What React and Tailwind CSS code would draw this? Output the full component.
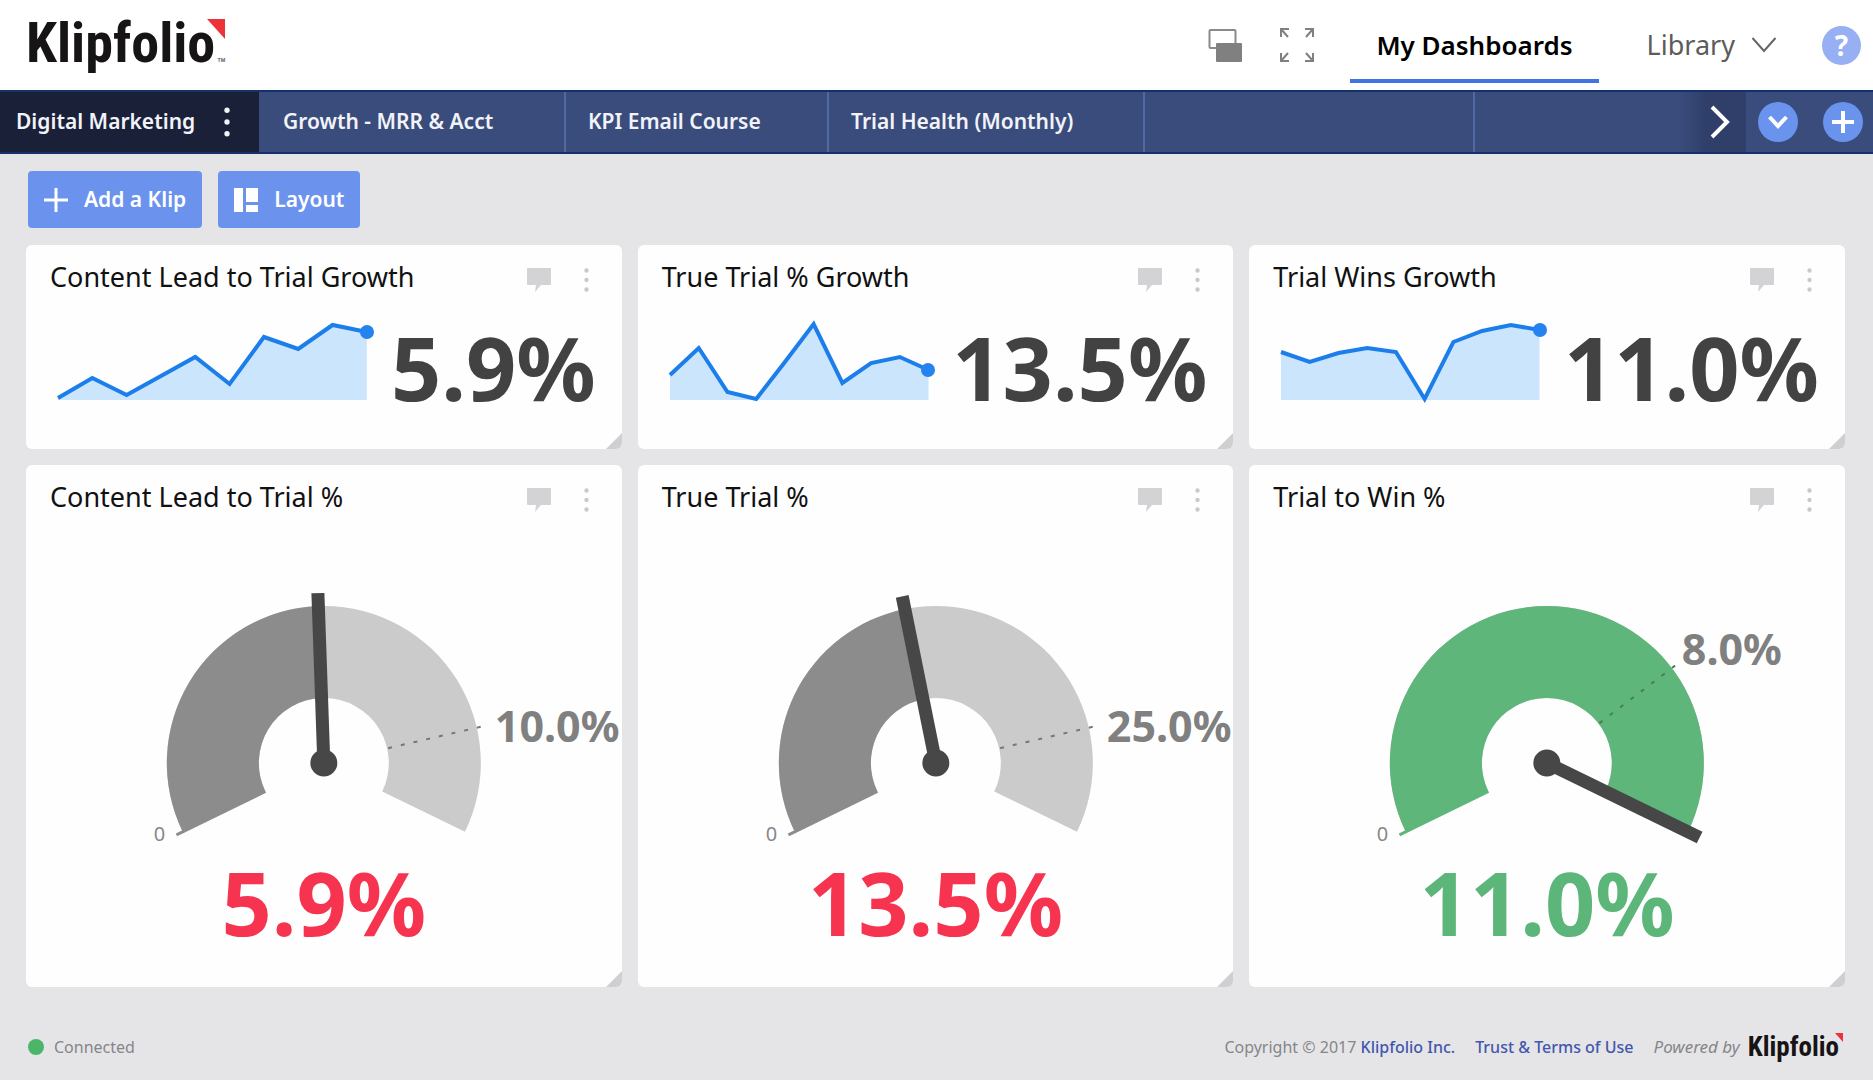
import { useState } from 'react'

const TABS = [
  { label: 'Digital Marketing', width: 'w-[259px] pl-4' },
  { label: 'Growth - MRR & Acct', width: 'w-[307px] pl-6' },
  { label: 'KPI Email Course', width: 'w-[263px] pl-[22px]' },
  { label: 'Trial Health (Monthly)', width: 'w-[316px] pl-[22px]' },
  { label: '', width: 'w-[330px]' },
]

// Points are heights from the top of a 78 unit tall plot
const GROWTH_KLIPS = [
  { title: 'Content Lead to Trial Growth', value: '5.9%', points: [75, 55, 72, 53, 34, 61, 14, 26, 2, 9] },
  { title: 'True Trial % Growth', value: '13.5%', points: [52, 25, 69, 76, 39, 1, 60, 40, 34, 47] },
  { title: 'Trial Wins Growth', value: '11.0%', points: [29, 39, 30, 25, 29, 76, 19, 8, 2, 7] },
]

// Angles in degrees, counter-clockwise from three o'clock
const GAUGE_KLIPS = [
  { title: 'Content Lead to Trial %', value: '5.9%', target: '10.0%', needle: 92, targetAngle: 13, labelX: 171, labelY: -21, met: false },
  { title: 'True Trial %', value: '13.5%', target: '25.0%', needle: 101.4, targetAngle: 13, labelX: 171, labelY: -21, met: false },
  { title: 'Trial to Win %', value: '11.0%', target: '8.0%', needle: -26, targetAngle: 37.2, labelX: 135, labelY: -98, met: true },
]

const START = 206
const END = -26
const OUTER = 157
const INNER = 65

const polar = (r, deg) => {
  const a = (deg * Math.PI) / 180
  return [r * Math.cos(a), -r * Math.sin(a)]
}

const arcPath = (from, to) => {
  const large = from - to > 180 ? 1 : 0
  return [
    `M${polar(OUTER, from)}`,
    `A${OUTER} ${OUTER} 0 ${large} 1 ${polar(OUTER, to)}`,
    `L${polar(INNER, to)}`,
    `A${INNER} ${INNER} 0 ${large} 0 ${polar(INNER, from)}`,
    'Z',
  ].join(' ')
}

function Logo({ small }) {
  return (
    <span
      className={`relative inline-block font-['Liberation_Sans_Narrow','Roboto_Condensed','Liberation_Sans',sans-serif] font-bold text-[#161415] ${
        small ? 'pr-1 text-[27px] leading-7' : 'pr-2.5 pb-1 text-[56px] leading-[56px]'
      }`}
    >
      Klipfolio
      <svg
        viewBox="0 0 18 20"
        className={`absolute right-0 ${small ? 'top-0 h-[9px] w-2' : 'top-1 h-5 w-[18px]'}`}
        aria-hidden="true"
      >
        <path d="M0 0H18V20Z" fill="#ee3338" />
      </svg>
      {!small && <span className="absolute right-0 bottom-3 text-[6px] leading-none text-gray-500">TM</span>}
    </span>
  )
}

function Dots({ className, size = 5 }) {
  return (
    <svg viewBox="0 0 6 30" className={className} fill="currentColor" aria-hidden="true">
      <circle cx="3" cy="4" r={size / 2} />
      <circle cx="3" cy="15" r={size / 2} />
      <circle cx="3" cy="26" r={size / 2} />
    </svg>
  )
}

function Header() {
  return (
    <header className="flex h-[90px] items-center bg-white pl-[26px] pr-3">
      <a href="#home" aria-label="Klipfolio">
        <Logo />
      </a>
      <div className="ml-auto flex h-full items-center">
        <button type="button" aria-label="Windows" className="mr-[38px]">
          <svg width="34" height="34" viewBox="0 0 34 34">
            <rect x="1.500" y="2" width="26" height="18" rx="1" fill="#fff" stroke="#8a8a8a" strokeWidth="2" />
            <rect x="8" y="15" width="26" height="19" rx="1" fill="#808080" />
          </svg>
        </button>
        <button type="button" aria-label="Full screen" className="mr-9">
          <svg width="34" height="34" viewBox="0 0 34 34" fill="none" stroke="#808080" strokeWidth="2">
            <path d="M1 9V1H9M1 1L8 9" />
            <path d="M25 1H33V9M33 1L26 9" />
            <path d="M1 25V33H9M1 33L8 25" />
            <path d="M33 25V33H25M33 33L26 25" />
          </svg>
        </button>
        <nav className="flex h-full items-center">
          <a
            href="#dashboards"
            className="mb-[7px] flex h-[83px] items-center self-end border-b-4 border-[#3f75e0] px-[26px] pb-0 pt-3 text-[26px] font-semibold text-black"
          >
            My Dashboards
          </a>
          <a href="#library" className="ml-12 flex items-center text-[27px] text-[#5c5c5c]">
            Library
            <svg className="ml-4" width="26" height="16" viewBox="0 0 26 16" fill="none" stroke="#666" strokeWidth="2">
              <path d="M1.500 1L13 14L24.500 1" />
            </svg>
          </a>
        </nav>
        <button
          type="button"
          aria-label="Help"
          className="ml-[45px] flex size-[39px] items-center justify-center rounded-full bg-[#97b0f4] text-[28px] font-bold leading-none text-white"
        >
          ?
        </button>
      </div>
    </header>
  )
}

function TabBar({ active, onSelect }) {
  return (
    <div className="flex h-16 border-y-2 border-[#133267] bg-[#3a4c7c] text-[21px] font-semibold text-[#f1f3f8]">
      {TABS.map((tab, i) => (
        <button
          key={i}
          type="button"
          aria-label={tab.label || 'Empty tab'}
          onClick={() => onSelect(i)}
          className={`flex shrink-0 items-center ${tab.width} ${
            i === active ? 'bg-[#192038] pr-7' : 'border-r-2 border-[#5069a4]'
          }`}
        >
          {tab.label}
          {i === active && <Dots className="ml-auto h-8 w-2" />}
        </button>
      ))}
      <div className="ml-auto flex items-center">
        <button
          type="button"
          aria-label="Scroll tabs"
          className="flex h-full w-[66px] items-center justify-end bg-linear-to-r from-[#3a4c7c] to-[#2f3f6a] to-40% pr-4"
        >
          <svg width="20" height="34" viewBox="0 0 20 34" fill="none" stroke="#fff" strokeWidth="4">
            <path d="M2 2L17 17L2 32" />
          </svg>
        </button>
        <button
          type="button"
          aria-label="All tabs"
          className="ml-3 flex size-10 items-center justify-center rounded-full bg-[#6a93ee]"
        >
          <svg width="20" height="14" viewBox="0 0 20 14" fill="none" stroke="#fff" strokeWidth="4">
            <path d="M1.500 2L10 11L18.500 2" />
          </svg>
        </button>
        <button
          type="button"
          aria-label="Add tab"
          className="ml-[25px] mr-[10px] flex size-10 items-center justify-center rounded-full bg-[#6a93ee]"
        >
          <svg width="22" height="22" viewBox="0 0 22 22" stroke="#fff" strokeWidth="4">
            <path d="M11 0V22M0 11H22" />
          </svg>
        </button>
      </div>
    </div>
  )
}

function Toolbar() {
  const button = 'flex h-[57px] items-center rounded bg-[#6b93ee] px-4 text-[21px] font-semibold text-white'
  return (
    <div className="flex gap-4 pb-[17px] pl-0.5 pt-[17px]">
      <button type="button" className={button}>
        <svg className="mr-4" width="24" height="24" viewBox="0 0 24 24" stroke="#fff" strokeWidth="3">
          <path d="M12 0V24M0 12H24" />
        </svg>
        Add a Klip
      </button>
      <button type="button" className={button}>
        <svg className="mr-4" width="24" height="24" viewBox="0 0 24 24" fill="#fff">
          <path d="M0 0H9V24H0ZM12 0H24V14H12ZM12 17H24V24H12Z" />
        </svg>
        Layout
      </button>
    </div>
  )
}

function Klip({ title, className, children }) {
  return (
    <section className={`relative flex flex-col overflow-hidden rounded-md bg-[#fefefe] ${className}`}>
      <div className="flex items-start pl-6 pr-8 pt-[15px]">
        <h2 className="text-[27px] leading-[34px] text-[#111]">{title}</h2>
        <button type="button" aria-label="Comments" className="ml-auto mt-[7px] text-[#d3d3d5]">
          <svg width="26" height="25" viewBox="0 0 26 25" fill="currentColor">
            <path d="M2 1H24Q25 1 25 2V17Q25 18 24 18H15L9 25L10 18H2Q1 18 1 17V2Q1 1 2 1Z" />
          </svg>
        </button>
        <button type="button" aria-label="Klip menu" className="ml-[31px] mt-[7px] text-[#c9c9cb]">
          <Dots className="h-[26px] w-[7px]" />
        </button>
      </div>
      {children}
      <svg className="absolute bottom-0 right-0" width="16" height="16" viewBox="0 0 16 16" aria-hidden="true">
        <path d="M16 0V16H0Z" fill="#cfcfd1" />
      </svg>
    </section>
  )
}

function Sparkline({ points }) {
  const step = 100 / (points.length - 1)
  const line = points.map((y, i) => `${i * step},${y}`).join(' ')
  return (
    <div className="relative mb-12 h-[78px] min-w-0 flex-1">
      <svg className="size-full overflow-visible" viewBox="0 0 100 78" preserveAspectRatio="none">
        <polygon points={`0,77 ${line} 100,77`} fill="#cbe5fd" />
        <polyline points={line} fill="none" stroke="#1b7eea" strokeWidth="4" vectorEffect="non-scaling-stroke" />
      </svg>
      <span
        className="absolute right-0 size-[14px] -translate-y-1/2 translate-x-1/2 rounded-full bg-[#2483ee]"
        style={{ top: points[points.length - 1] }}
      />
    </div>
  )
}

function Gauge({ klip }) {
  const color = klip.met ? '#5eb67a' : '#8c8c8c'
  const [tx, ty] = polar(170, klip.needle)
  const [ix, iy] = polar(66, klip.targetAngle)
  const [ox, oy] = polar(161, klip.targetAngle)
  const [sx, sy] = polar(INNER, START)
  const [ex, ey] = polar(164, START)
  return (
    <svg
      className="mt-[70px] h-[260px] w-full overflow-visible"
      viewBox="-296 -179 592 260"
      role="img"
      aria-label={`${klip.title} gauge`}
    >
      <path d={arcPath(START, END)} fill="#cbcbcb" />
      <path d={arcPath(START, klip.needle)} fill={color} />
      <line x1={sx} y1={sy} x2={ex} y2={ey} stroke={color} strokeWidth="3" />
      <line x1={ix} y1={iy} x2={ox} y2={oy} stroke={klip.met ? '#4b7d5a' : '#777'} strokeWidth="2" strokeDasharray="4 9" />
      <line x1="0" y1="0" x2={tx} y2={ty} stroke="#474747" strokeWidth="13" />
      <circle r="13.500" fill="#474747" />
      <text x="-170" y="78" className="fill-[#888] text-[20px]">
        0
      </text>
      <text x={klip.labelX} y={klip.labelY} className="fill-[#808080] text-[43px] font-bold">
        {klip.target}
      </text>
    </svg>
  )
}

function Footer() {
  return (
    <footer className="flex items-center px-0.5 pt-[46px] text-[16px] leading-7 text-[#868688]">
      <span className="mr-2.5 size-4 rounded-full bg-[#4cb668]" />
      Connected
      <div className="ml-auto flex items-center">
        <span>
          Copyright © 2017{' '}
          <a href="#company" className="font-medium text-[#4457ad]">
            Klipfolio Inc.
          </a>
        </span>
        <a href="#terms" className="ml-5 font-medium text-[#4457ad]">
          Trust &amp; Terms of Use
        </a>
        <span className="ml-5 mr-2 text-[17px] italic">Powered by</span>
        <Logo small />
      </div>
    </footer>
  )
}

export default function App() {
  const [activeTab, setActiveTab] = useState(0)

  return (
    <div className="min-h-screen bg-[#e5e5e8] font-['Noto_Sans','Open_Sans',sans-serif]">
      <Header />
      <TabBar active={activeTab} onSelect={setActiveTab} />
      <main className="pl-[26px] pr-7">
        <Toolbar />
        <div className="grid grid-cols-3 gap-4">
          {GROWTH_KLIPS.map((klip) => (
            <Klip key={klip.title} title={klip.title} className="h-[204px]">
              <div className="flex flex-1 items-end pl-8 pr-[26px]">
                <Sparkline points={klip.points} />
                <span className="mb-8 ml-6 text-[88px] font-bold leading-[100px] text-[#424242]">{klip.value}</span>
              </div>
            </Klip>
          ))}
          {GAUGE_KLIPS.map((klip) => (
            <Klip key={klip.title} title={klip.title} className="h-[522px]">
              <Gauge klip={klip} />
              <p
                className={`mt-2 text-center text-[88px] font-bold leading-[100px] ${
                  klip.met ? 'text-[#5cb579]' : 'text-[#f6344f]'
                }`}
              >
                {klip.value}
              </p>
            </Klip>
          ))}
        </div>
        <Footer />
      </main>
    </div>
  )
}
